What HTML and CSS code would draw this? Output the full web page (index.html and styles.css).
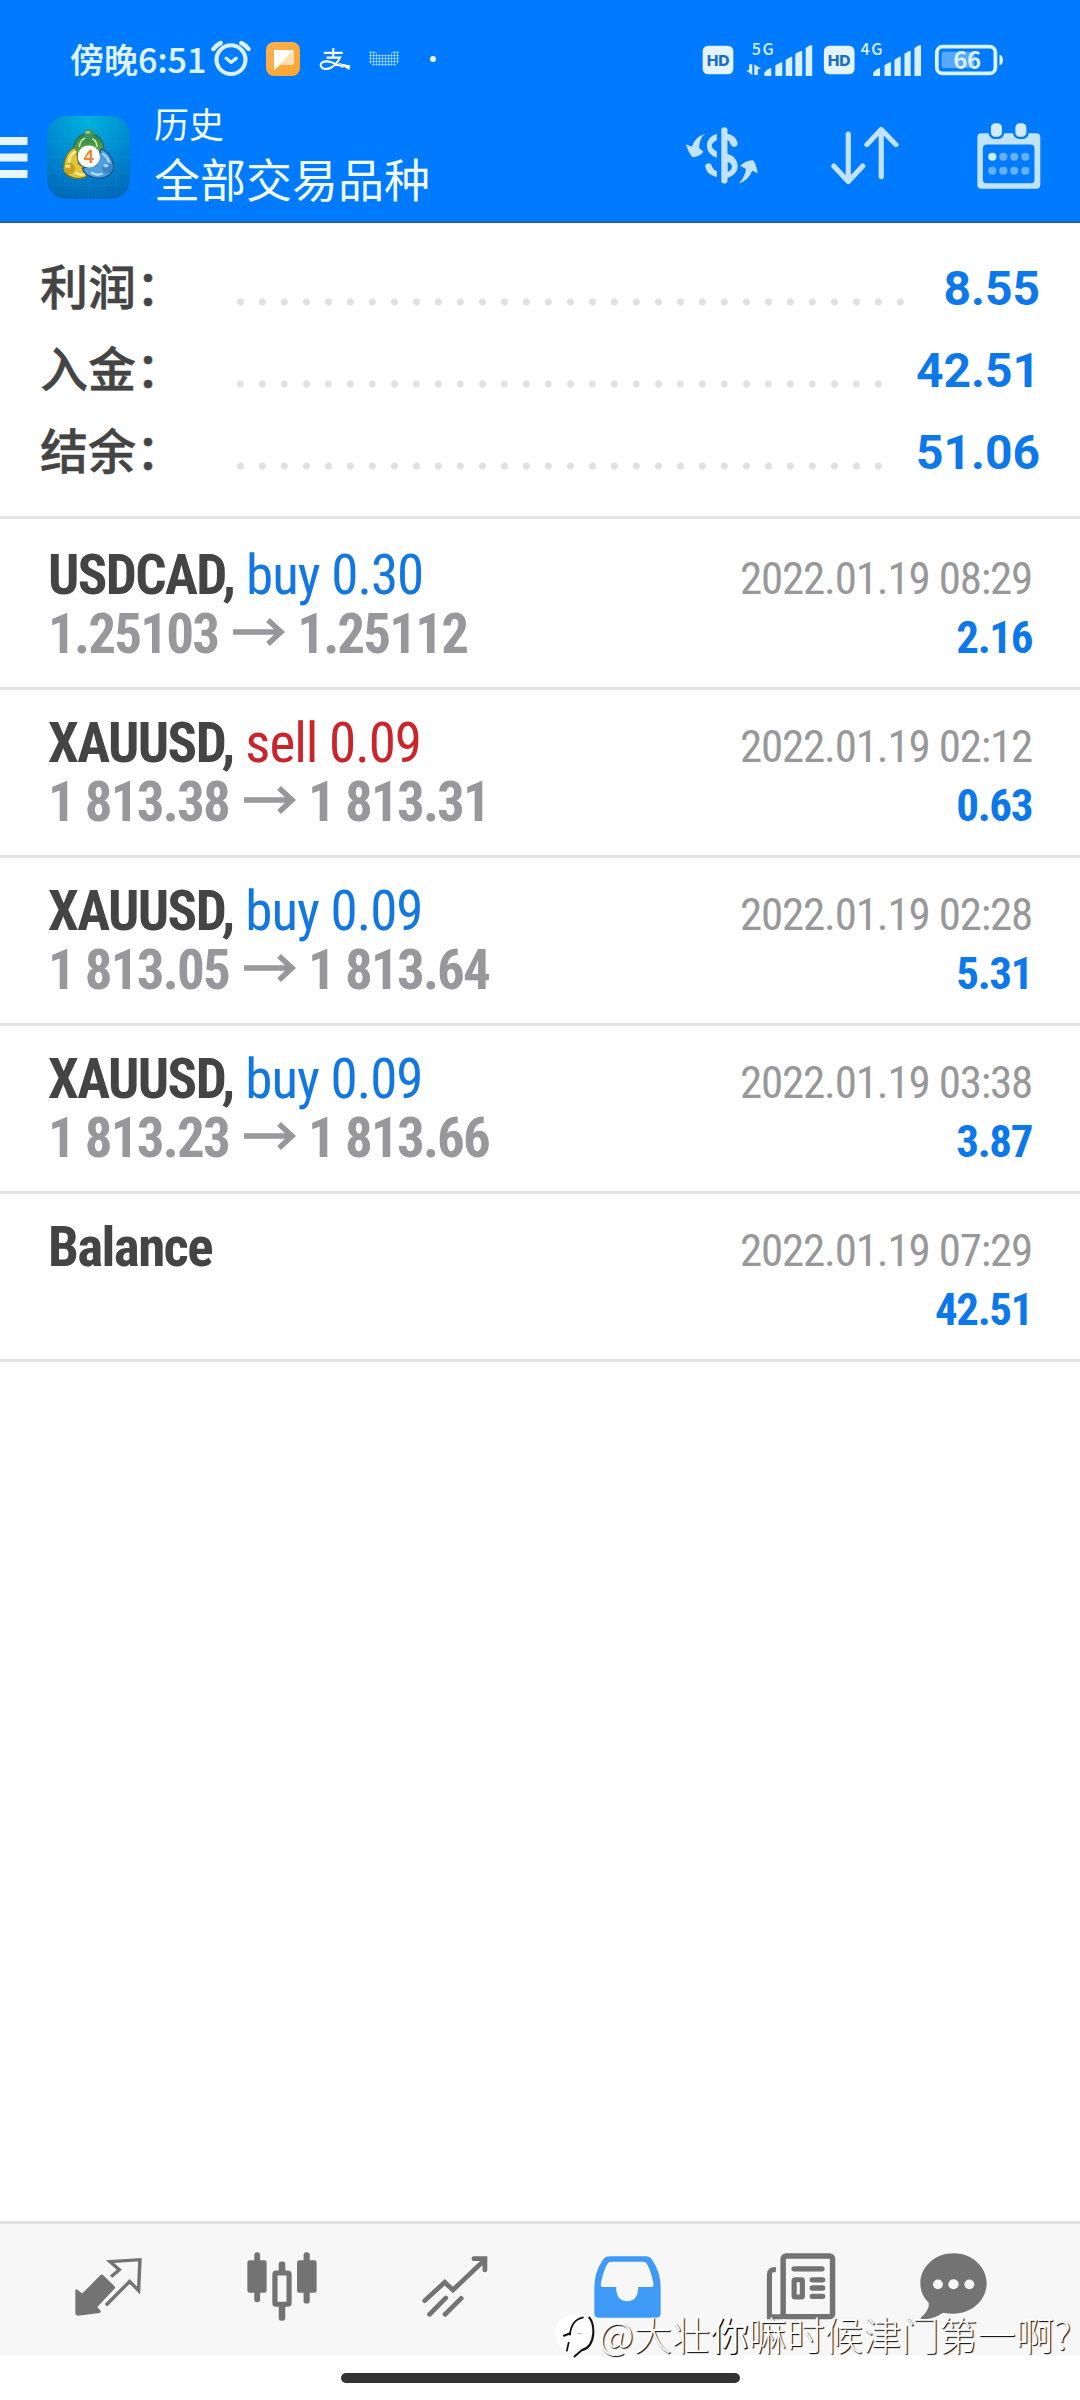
FILE: index.html
```html
<!DOCTYPE html>
<html lang="zh">
<head>
<meta charset="utf-8">
<title>历史</title>
<link rel="stylesheet" href="styles.css">
</head>
<body>
<div class="app">
  <header class="header">
    <div class="status">
      <span class="clock">傍晚6:51</span>
      <svg class="alarm" width="40" height="37" viewBox="614 121 116 111" preserveAspectRatio="none" fill="none" stroke="#d9f1ff" stroke-linecap="round"><ellipse cx="672" cy="180" rx="42" ry="43" stroke-width="12"/><path d="M658 176l14 12 15-12" stroke-width="10" stroke-linejoin="round"/><path d="M621 148q9-12 21-18M723 148q-9-12-21-18" stroke-width="13"/></svg>
      <svg class="note" width="34" height="34" viewBox="0 0 34 34"><defs><linearGradient id="amber" x1="0" y1="0" x2="1" y2="1"><stop offset="0" stop-color="#f7b052"/><stop offset="1" stop-color="#ffa52e"/></linearGradient></defs><rect width="34" height="34" rx="8" fill="url(#amber)"/><path d="M8 8h18q2 0 2 2v11q0 2-2 2H14l-6 5z" fill="#ffe0b5"/><path d="M8 8h19L8 28z" fill="#fff"/></svg>
      <svg class="pay" width="32" height="24" viewBox="358 52 94 68" fill="none" stroke="#fff"><path d="M372 68h56M400 54v28" stroke-width="6"/><path d="M380 82h40q-10 20-26 29-16 8-27 1-9-9 1-16 10-6 28 0l34 14" stroke-width="6"/><path d="M412 97l38 8-3 13z" fill="#fff" stroke="none"/></svg>
      <span class="keys"></span>
      <span class="more"></span>
      <svg class="signals" width="302" height="36" viewBox="470 120 877 108" preserveAspectRatio="none">
        <rect x="472" y="134" width="89" height="86" rx="16" fill="#e4f4ff"/>
        <rect x="824" y="134" width="89" height="86" rx="16" fill="#e4f4ff"/>
        <path d="M651 225v-10q8-12 20-15v25zM683 225v-32l17-9h3v41zM713 225v-49l15-9h4v58zM741 225v-67l15-8h5v75zM771 225v-84l13-8h6v92zM967 225v-10q8-12 20-15v25zM1000 225v-32l15-9h4v41zM1029 225v-49l14-9h4v58zM1058 225v-67l13-8h5v75zM1087 225v-84l13-8h6v92z" fill="#d9f1ff"/>
        <path d="M616 190v32l-18-14h9v-18zM622 222v-32l20 14h-10v18z" fill="#d9f1ff"/>
        <rect x="1152" y="137" width="170" height="80" rx="17" fill="none" stroke="#d9f4ff" stroke-width="11"/>
        <rect x="1166" y="152" width="96" height="49" rx="6" fill="#55a8ff"/>
        <path d="M1334 161q10 2 10 16t-10 16z" fill="#d9f4ff"/>
        <g class="sigtext" transform="scale(2.904 3)">
          <text x="166.5" y="65.2" textLength="23" lengthAdjust="spacingAndGlyphs" class="hd">HD</text>
          <text x="287.5" y="65.2" textLength="23" lengthAdjust="spacingAndGlyphs" class="hd">HD</text>
          <text x="211.5" y="54.3" textLength="22" class="gen">5G</text>
          <text x="320.3" y="54.3" textLength="22" class="gen">4G</text>
          <text x="413" y="68.5" textLength="28" class="batt">66</text>
        </g>
      </svg>
    </div>
    <div class="bar">
      <svg class="menu" width="28" height="41" viewBox="0 0 28 41" fill="#e6f5ff"><path d="M0 0h27.500v8H0zM0 16.500h27.500v8H0zM0 33h27.500v8H0z"/></svg>
      <svg class="logo" width="83" height="83" viewBox="0 0 248 248">
        <defs>
          <radialGradient id="sky" cx=".5" cy="0.05" r="1.05"><stop offset="0" stop-color="#00b2de"/><stop offset=".55" stop-color="#0085cf"/><stop offset="1" stop-color="#0063b4"/></radialGradient>
          <linearGradient id="gr" x1="0" y1="0" x2="0" y2="1"><stop offset="0" stop-color="#2d7d46"/><stop offset="1" stop-color="#6cc04a"/></linearGradient>
        </defs>
        <rect width="248" height="248" rx="58" fill="url(#sky)"/>
        <path d="M40 4v240M77 0v248M124 0v40M124 200v48M171 0v248M208 4v240M4 40h240M0 77h248M0 124h48M200 124h48M0 171h40M208 171h40M4 208h240" stroke="#4cc0f0" stroke-opacity=".12" stroke-width="2"/>
        <path d="M124 52c-30 0-48 26-44 60l30 12 34 6 22-12c12-32-8-66-42-66z" fill="url(#gr)" stroke="#2b6b58" stroke-width="4"/>
        <path d="M96 92q4-26 26-28 26 2 28 28" fill="none" stroke="#c4e8a0" stroke-width="5"/>
        <path d="M86 94c-22 6-36 34-36 60 0 24 30 36 52 32 16-2 26-12 20-24l-28-20z" fill="#e6c43a" stroke="#6e7a28" stroke-width="4"/>
        <path d="M66 140q0-26 22-34M84 168q14 12 30 4" fill="none" stroke="#fff3a0" stroke-width="6"/>
        <path d="M162 98c26 10 38 36 36 60-6 22-34 32-58 26-20-4-32-16-34-28l40-10z" fill="#4f9fdc" stroke="#1a5590" stroke-width="4"/>
        <path d="M166 112q20 14 20 34M132 168q14 12 34 4" fill="none" stroke="#b5e2ff" stroke-width="6"/>
        <circle cx="126" cy="55" r="16" fill="#3f925c"/><ellipse cx="122" cy="49" rx="8" ry="5" fill="#91c796"/>
        <circle cx="67" cy="157" r="17" fill="#c6a224"/><ellipse cx="62" cy="150" rx="8" ry="6" fill="#f6e46d"/>
        <circle cx="180" cy="155" r="16" fill="#3c83c4"/><ellipse cx="176" cy="148" rx="8" ry="6" fill="#8fd1fa"/>
        <circle cx="125" cy="121" r="33" fill="#fff"/>
        <text x="125" y="141" text-anchor="middle" class="four">4</text>
      </svg>
      <div class="titles"><div class="t1">历史</div><div class="t2">全部交易品种</div></div>
      <svg class="action" width="72" height="57" viewBox="424 382 210 168" preserveAspectRatio="none" fill="#c2e3ff">
        <path d="M527 389q1-6 9-6t9 6v154q-1 6-9 6t-9-6z"/>
        <path d="M514 402v19q-15 8-15 16t15 17v19q-29-11-29-36 0-26 29-35zM543 401q26 4 32 30-2 10-12 10-6 0-9-8-3-10-11-14zM543 460q32 10 32 38 0 25-32 35zM545 485v30q13-6 13-16t-13-14zM480 497q2-8 10-8 9 1 10 10 4 10 14 13v18q-32-8-34-33z" fill-rule="evenodd"/>
        <path d="M480 403q-15 8-18 40l13 12q-12 16-32 16-12-12-19-38l17 7q12-32 39-37zM578 548q17-16 21-42l-17-10q18-16 38-16 10 14 13 38l-16-7q-11 30-39 37z"/>
      </svg>
      <svg class="action sort" width="68" height="59" viewBox="846 381 197 177" preserveAspectRatio="none" fill="none" stroke="#c2e3ff" stroke-width="15" stroke-linecap="round" stroke-linejoin="round"><path d="M896 405v140M854 501l42 47 42-47M991.500 533v-138M950 437l41.500-46 42.500 46"/></svg>
      <svg class="action calendar" width="64" height="66" viewBox="1268 367 186 199" preserveAspectRatio="none"><path d="M1281 398h159q12 0 12 12v143q0 12-12 12h-159q-12 0-12-12v-143q0-12 12-12zM1297 432q-12 0-12 12v93q0 12 12 12h126q12 0 12-12v-93q0-12-12-12z" fill="#c2e3ff" fill-rule="evenodd"/><g fill="#d2ebff" stroke="#007aff" stroke-width="7"><rect x="1305" y="364" width="39" height="48" rx="16"/><rect x="1376" y="364" width="39" height="48" rx="16"/></g><circle cx="1312.500" cy="469" r="12" fill="#c9f0ff"/><g fill="#66b0ff"><circle cx="1344.500" cy="469" r="12"/><circle cx="1376.500" cy="469" r="12"/><circle cx="1408.500" cy="469" r="12"/><circle cx="1312.500" cy="511" r="12"/><circle cx="1344.500" cy="511" r="12"/><circle cx="1376.500" cy="511" r="12"/><circle cx="1408.500" cy="511" r="12"/></g></svg>
    </div>
  </header>

  <section class="summary">
    <div class="sum"><span class="label">利润：</span><span class="dots"></span><span class="value">8.55</span></div>
    <div class="sum"><span class="label">入金：</span><span class="dots"></span><span class="value">42.51</span></div>
    <div class="sum"><span class="label">结余：</span><span class="dots"></span><span class="value">51.06</span></div>
  </section>

  <main class="deals">
    <article class="deal">
      <div class="line"><span class="name"><b>USDCAD,</b> <span class="buy">buy 0.30</span></span><span class="date">2022.01.19 08:29</span></div>
      <div class="line"><span class="price">1.25103<svg class="arrow" width="53" height="28" viewBox="0 0 53 28"><path d="M0 14h48M35 2l13 12-13 12"/></svg>1.25112</span><span class="profit">2.16</span></div>
    </article>
    <article class="deal">
      <div class="line"><span class="name"><b>XAUUSD,</b> <span class="sell">sell 0.09</span></span><span class="date">2022.01.19 02:12</span></div>
      <div class="line"><span class="price">1 813.38<svg class="arrow" width="53" height="28" viewBox="0 0 53 28"><path d="M0 14h48M35 2l13 12-13 12"/></svg>1 813.31</span><span class="profit">0.63</span></div>
    </article>
    <article class="deal">
      <div class="line"><span class="name"><b>XAUUSD,</b> <span class="buy">buy 0.09</span></span><span class="date">2022.01.19 02:28</span></div>
      <div class="line"><span class="price">1 813.05<svg class="arrow" width="53" height="28" viewBox="0 0 53 28"><path d="M0 14h48M35 2l13 12-13 12"/></svg>1 813.64</span><span class="profit">5.31</span></div>
    </article>
    <article class="deal">
      <div class="line"><span class="name"><b>XAUUSD,</b> <span class="buy">buy 0.09</span></span><span class="date">2022.01.19 03:38</span></div>
      <div class="line"><span class="price">1 813.23<svg class="arrow" width="53" height="28" viewBox="0 0 53 28"><path d="M0 14h48M35 2l13 12-13 12"/></svg>1 813.66</span><span class="profit">3.87</span></div>
    </article>
    <article class="deal">
      <div class="line"><span class="name"><b>Balance</b></span><span class="date">2022.01.19 07:29</span></div>
      <div class="line"><span class="price">&nbsp;</span><span class="profit">42.51</span></div>
    </article>
  </main>

  <nav class="tabs">
    <span class="tab"><svg width="67" height="60" viewBox="218 176 195 179" preserveAspectRatio="none" fill="#737373"><path d="M219 274q2-4 6 0l14 11 54-56q5-2 8 2l32 32q3 4 0 8l-50 54 10 12q1 5-4 6l-62 8q-6 0-8-6z"/><path d="M323 235l24-21-27-24 87-6-4 92-26-27-69 71" fill="none" stroke="#737373" stroke-width="10"/></svg></span>
    <span class="tab"><svg width="70" height="69" viewBox="715 161 203 206" preserveAspectRatio="none" fill="#737373"><rect x="716" y="186" width="56" height="97" rx="7"/><rect x="736" y="162" width="17" height="149" rx="8"/><rect x="860" y="186" width="57" height="97" rx="7"/><rect x="879" y="162" width="18" height="153" rx="8"/><rect x="807" y="189" width="19" height="40" rx="8"/><rect x="807" y="312" width="19" height="54" rx="8"/><rect x="796" y="224" width="41" height="93" rx="4" fill="#f7f7f7" stroke="#737373" stroke-width="15"/></svg></span>
    <span class="tab"><svg width="66" height="61" viewBox="1223 170 192 183" preserveAspectRatio="none" fill="none" stroke="#737373" stroke-width="14" stroke-linecap="round"><path d="M1231 304l58-55 24 23 90-88M1374 178h32v34M1245 345l47-49M1290 345l47-48"/></svg></span>
    <span class="tab"><svg width="67" height="62" viewBox="157 169 194 184" preserveAspectRatio="none"><path d="M203 170h103q13 0 19 10 25 36 25 82v78q0 12-12 12H170q-12 0-12-12v-78q0-46 25-82 6-10 20-10zM207 186q-9 0-13 10-11 22-17 54-2 11 8 11h36q0 42 32 42t32-42h36q10 0 8-11-6-32-17-54-4-10-13-10z" fill="#3f99f7" fill-rule="evenodd"/></svg></span>
    <span class="tab"><svg width="70" height="67" viewBox="656 161 204 201" preserveAspectRatio="none" fill="none" stroke="#737373"><rect x="706" y="170" width="144" height="182" rx="8" stroke-width="16"/><path d="M685 211q-19-2-19 15v126h40" stroke-width="15"/><path d="M738 208.500h81M791 241.500h30M791 266h30M791 291h30" stroke-width="16" stroke-linecap="round"/><rect x="738" y="241" width="24" height="52" rx="3" stroke-width="15"/></svg></span>
    <span class="tab last"><svg width="67" height="67" viewBox="1102 161 194 201" preserveAspectRatio="none"><path d="M1199 162c53 0 96 40 96 90s-43 91-96 91q-16 0-30-3-28 20-62 20-5-1-2-6 26-22 22-44-24-24-24-58c0-50 43-90 96-90z" fill="#737373"/><g fill="#f7f7f7"><circle cx="1154" cy="255" r="14.500"/><circle cx="1199" cy="255" r="15"/><circle cx="1245" cy="255" r="14.500"/></g></svg></span>
  </nav>
  <div class="gesture"><span class="pill"></span></div>
  <div class="mark"><svg width="40" height="46" viewBox="42 356 116 138" preserveAspectRatio="none" fill="none"><ellipse cx="94" cy="417" rx="51" ry="56" fill="#fff" fill-opacity=".85"/><g stroke="#111"><path d="M76 471l6-28M85 423q4-48 40-54" stroke-width="5"/><path d="M140 368q15 16 13 50-3 42-34 50l-22 20" stroke-width="6"/><path d="M66 425l22-9" stroke-width="6"/></g><path d="M106 417l14 1" stroke="#999" stroke-width="2"/></svg><span class="marktext">@大壮<b>你</b>嘛时候津门第一啊?</span></div>
</div>
</body>
</html>
```
FILE: styles.css
```css
* { box-sizing: border-box; }
body { margin: 0; background: #fff; }
svg { display: block; flex: none; }

.app {
  position: relative;
  display: flex;
  flex-direction: column;
  width: 1080px;
  height: 2400px;
  overflow: hidden;
  font-family: Roboto, "Noto Sans CJK SC", sans-serif;
}

/* header */
.header {
  height: 223px;
  background: #007aff;
  border-bottom: 2px solid #1e64a8;
  color: #effaff;
}
.status {
  display: flex;
  align-items: center;
  height: 106px;
  padding: 11px 0 0 70px;
}
.clock {
  width: 141px;
  font: 500 34px/40px "Noto Sans CJK SC", sans-serif;
  white-space: nowrap;
  color: #dff4ff;
  -webkit-text-stroke: 0.2px #dff4ff;
}
.note { margin-left: 15px; }
.pay { margin-left: 19px; }
.keys {
  width: 30px;
  height: 15px;
  margin-left: 18px;
  background: radial-gradient(circle, #b5e6ff 0.6px, transparent 1.5px) 0 0 / 3px 3px;
  clip-path: polygon(0 0, 20% 0, 30% 25%, 70% 25%, 80% 0, 100% 0, 100% 75%, 85% 100%, 15% 100%, 0 75%);
}
.more {
  width: 6px;
  height: 6px;
  margin-left: 31px;
  border-radius: 50%;
  background: #e6f8ff;
}
.signals { margin-left: 266px; overflow: visible; }
.sigtext { font-family: "Noto Sans CJK SC", sans-serif; fill: #d9f1ff; }
.hd { font-family: Inter, sans-serif; font-weight: 800; font-size: 15px; fill: #1b6fc2; }
.gen { font-size: 16px; font-weight: 500; }
.batt { font-size: 24px; font-weight: 700; }

.bar { display: flex; align-items: center; height: 102px; }
.logo { margin-left: 19px; }
.four { font: 700 54px "Liberation Sans", sans-serif; fill: #ef8430; }
.titles {
  width: 532px;
  margin-left: 24px;
  padding-bottom: 4px;
  white-space: nowrap;
}
.t1 { font: 400 35px/44px "Noto Sans CJK SC", sans-serif; }
.t2 { font: 400 46px/64px "Noto Sans CJK SC", sans-serif; }
.action { margin-bottom: 3px; }
.sort { margin-left: 73px; }
.calendar { margin-left: 78px; }

/* totals */
.summary {
  height: 296px;
  padding: 24px 40px 0;
  border-bottom: 3px solid #e3e3e3;
}
.sum { display: flex; align-items: center; height: 82px; }
.label {
  width: 196px;
  padding-bottom: 9px;
  font: 500 48px/60px "Noto Sans CJK SC", sans-serif;
  color: #444;
  -webkit-text-stroke: 0.5px #444;
}
.dots {
  flex: 1;
  height: 8px;
  margin-top: 27px;
  background: radial-gradient(circle, #e0e0e0 3px, transparent 4px) -6.6px 0 / 22px 8px repeat-x;
}
.value {
  margin-left: 31px;
  font-size: 48px;
  font-weight: 700;
  color: #0d78ea;
}

/* deals */
.deal {
  height: 168px;
  padding: 24px 48px 0 48px;
  border-bottom: 3px solid #e3e3e3;
  font-family: "Roboto Condensed", Roboto, sans-serif;
  font-stretch: 75%;
}
.deal:first-child { height: 171px; padding-top: 27px; }
.line {
  display: flex;
  justify-content: space-between;
  align-items: baseline;
  height: 59px;
  line-height: 59px;
  white-space: nowrap;
}
.name { font-size: 55px; color: #444; letter-spacing: -1px; }
.name b { letter-spacing: -1.6px; }
.buy { color: #1277e0; }
.sell { color: #c9252b; }
.price { font-size: 55px; font-weight: 700; color: #98989c; letter-spacing: -1.8px; }
.arrow {
  display: inline-block;
  margin: 0 11px 0 15px;
  vertical-align: 7px;
  fill: none;
  stroke: #98989c;
  stroke-width: 5.5;
}
.date { font-size: 45px; color: #98989a; letter-spacing: -1.2px; }
.profit { font-size: 45px; font-weight: 700; color: #0d78ea; letter-spacing: -1.4px; }

/* bottom tabs */
.tabs {
  display: flex;
  height: 134px;
  margin-top: auto;
  padding-left: 22px;
  background: #f7f7f7;
  border-top: 3px solid #e1e1e1;
}
.tab {
  display: flex;
  justify-content: center;
  align-items: center;
  width: 173px;
  height: 125px;
}
.last { width: 132px; }
.gesture {
  display: flex;
  justify-content: center;
  height: 45px;
  padding-top: 18px;
}
.pill { width: 399px; height: 10px; border-radius: 5px; background: #333; }

/* watermark laid over the tabs */
.mark {
  position: absolute;
  left: 555px;
  top: 2313px;
  display: flex;
  align-items: center;
}
.marktext {
  margin: -5px 0 0 4px;
  font: 300 38.2px/46px "Noto Sans CJK SC", sans-serif;
  color: #fff;
  text-shadow: 1px 1px 1px #000;
  white-space: nowrap;
}
.marktext b { font-weight: 400; text-shadow: 1px 1px 0 #000, 1px 1px 1px #000; }
```
